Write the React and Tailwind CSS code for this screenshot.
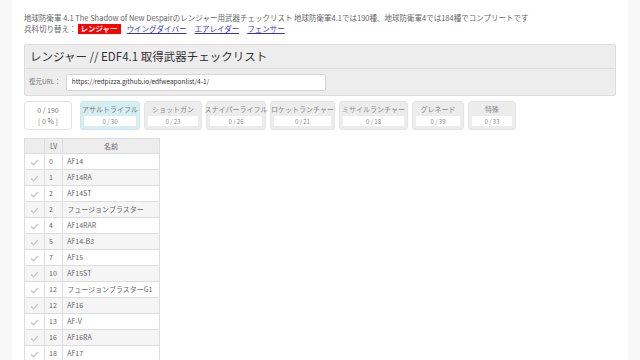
import React from "react";

const tabs = [
  { name: "アサルトライフル", count: "0 / 30", w: "w-[60px]", active: true },
  { name: "ショットガン", count: "0 / 23", w: "w-[58px]" },
  { name: "スナイパーライフル", count: "0 / 26", w: "w-[60px]" },
  { name: "ロケットランチャー", count: "0 / 21", w: "w-[65px]" },
  { name: "ミサイルランチャー", count: "0 / 18", w: "w-[69px]" },
  { name: "グレネード", count: "0 / 39", w: "w-[52px]" },
  { name: "特殊", count: "0 / 33", w: "w-[48px]" },
];

const rows = [
  ["0", "AF14"],
  ["1", "AF14RA"],
  ["2", "AF14ST"],
  ["2", "フュージョンブラスター"],
  ["4", "AF14RAR"],
  ["5", "AF14-B3"],
  ["7", "AF15"],
  ["10", "AF15ST"],
  ["12", "フュージョンブラスターG1"],
  ["12", "AF16"],
  ["13", "AF-V"],
  ["16", "AF16RA"],
  ["18", "AF17"],
  ["20", "AF18"],
];

export default function App() {
  return (
    <div
      className="min-h-[360px] h-[360px] overflow-hidden bg-[#f8f8f8] text-[#555]"
      style={{ fontFamily: '"Noto Sans CJK JP", "Noto Sans", sans-serif' }}
    >
      <div className="mx-[12px] h-[360px] bg-white px-[12px] pt-[12px]">
        <div className="text-[7.5px] leading-[11px] text-[#666] whitespace-nowrap">
          地球防衛軍 4.1 The Shadow of New Despairのレンジャー用武器チェックリスト 地球防衛軍4.1では190種、地球防衛軍4では184種でコンプリートです
        </div>
        <div className="flex items-center text-[7.5px] leading-[11px] text-[#666] whitespace-nowrap">
          <span>兵科切り替え：</span>
          <span className="ml-[1px] bg-[#ff0000] px-[3px] font-bold text-white leading-[10px]">レンジャー</span>
          <span className="ml-[6px] text-[#3333cc] underline">ウイングダイバー</span>
          <span className="ml-[8px] text-[#3333cc] underline">エアレイダー</span>
          <span className="ml-[8px] text-[#3333cc] underline">フェンサー</span>
        </div>

        <div className="mt-[10px] rounded-[2px] border border-[#dcdcdc] bg-[#ededed]">
          <div className="flex h-[24px] items-center border-b border-[#dcdcdc] px-[5px] text-[11.5px] text-[#333]">
            レンジャー // EDF4.1 取得武器チェックリスト
          </div>
          <div className="flex h-[26px] items-center px-[4px]">
            <span className="text-[6.5px] text-[#777]">復元URL：</span>
            <div className="ml-[5px] flex h-[17px] w-[260px] items-center rounded-[2px] border border-[#d5d5d5] bg-white px-[5px] text-[6.5px] text-[#333]">
              https://redpizza.github.io/edfweaponlist/4-1/
            </div>
          </div>
        </div>

        <div className="mt-[5px] flex h-[29px] items-stretch text-[7px] text-[#888]">
          <div className="flex w-[48px] flex-col items-center justify-center rounded-[3px] border border-[#e2e2e2] bg-white leading-[11px] text-[#777]">
            <div>0 / 190</div>
            <div>[ 0 % ]</div>
          </div>
          <div className="ml-[8px] flex gap-[4px]">
            {tabs.map((t) => (
              <div
                key={t.name}
                className={
                  "flex flex-col items-center rounded-[3px] border px-[3px] pt-[2px] " +
                  t.w +
                  (t.active ? " border-[#cfe8ec] bg-[#d5eef2] text-[#777]" : " border-[#e6e6e6] bg-[#ececec] text-[#888]")
                }
              >
                <div className="whitespace-nowrap leading-[11px]">{t.name}</div>
                <div className="mt-[1px] flex h-[10px] w-full items-center justify-center bg-white text-[6px] text-[#888]">
                  {t.count}
                </div>
              </div>
            ))}
          </div>
        </div>

        <table className="mt-[8px] w-[136px] border-collapse text-[7px] text-[#666]">
          <thead>
            <tr className="h-[15px] bg-[#ededed]">
              <th className="w-[20px] border border-[#dddddd] font-normal"></th>
              <th className="w-[18px] border border-[#dddddd] px-[5px] text-left font-normal">LV</th>
              <th className="border border-[#dddddd] text-center font-normal">名前</th>
            </tr>
          </thead>
          <tbody>
            {rows.map(([lv, name], i) => (
              <tr key={i} className={"h-[16px] " + (i % 2 === 1 ? "bg-[#f5f5f5]" : "bg-white")}>
                <td className="border border-[#dddddd] text-center text-[#c4c4c4]">
                  <svg width="9" height="7" viewBox="0 0 9 7" className="inline-block">
                    <path d="M1 3.5 L3.5 6 L8 1" fill="none" stroke="#c4c4c4" strokeWidth="1.2" />
                  </svg>
                </td>
                <td className="border border-[#dddddd] px-[4px] whitespace-nowrap">{lv}</td>
                <td className="border border-[#dddddd] px-[4px] whitespace-nowrap">{name}</td>
              </tr>
            ))}
          </tbody>
        </table>
      </div>
    </div>
  );
}
